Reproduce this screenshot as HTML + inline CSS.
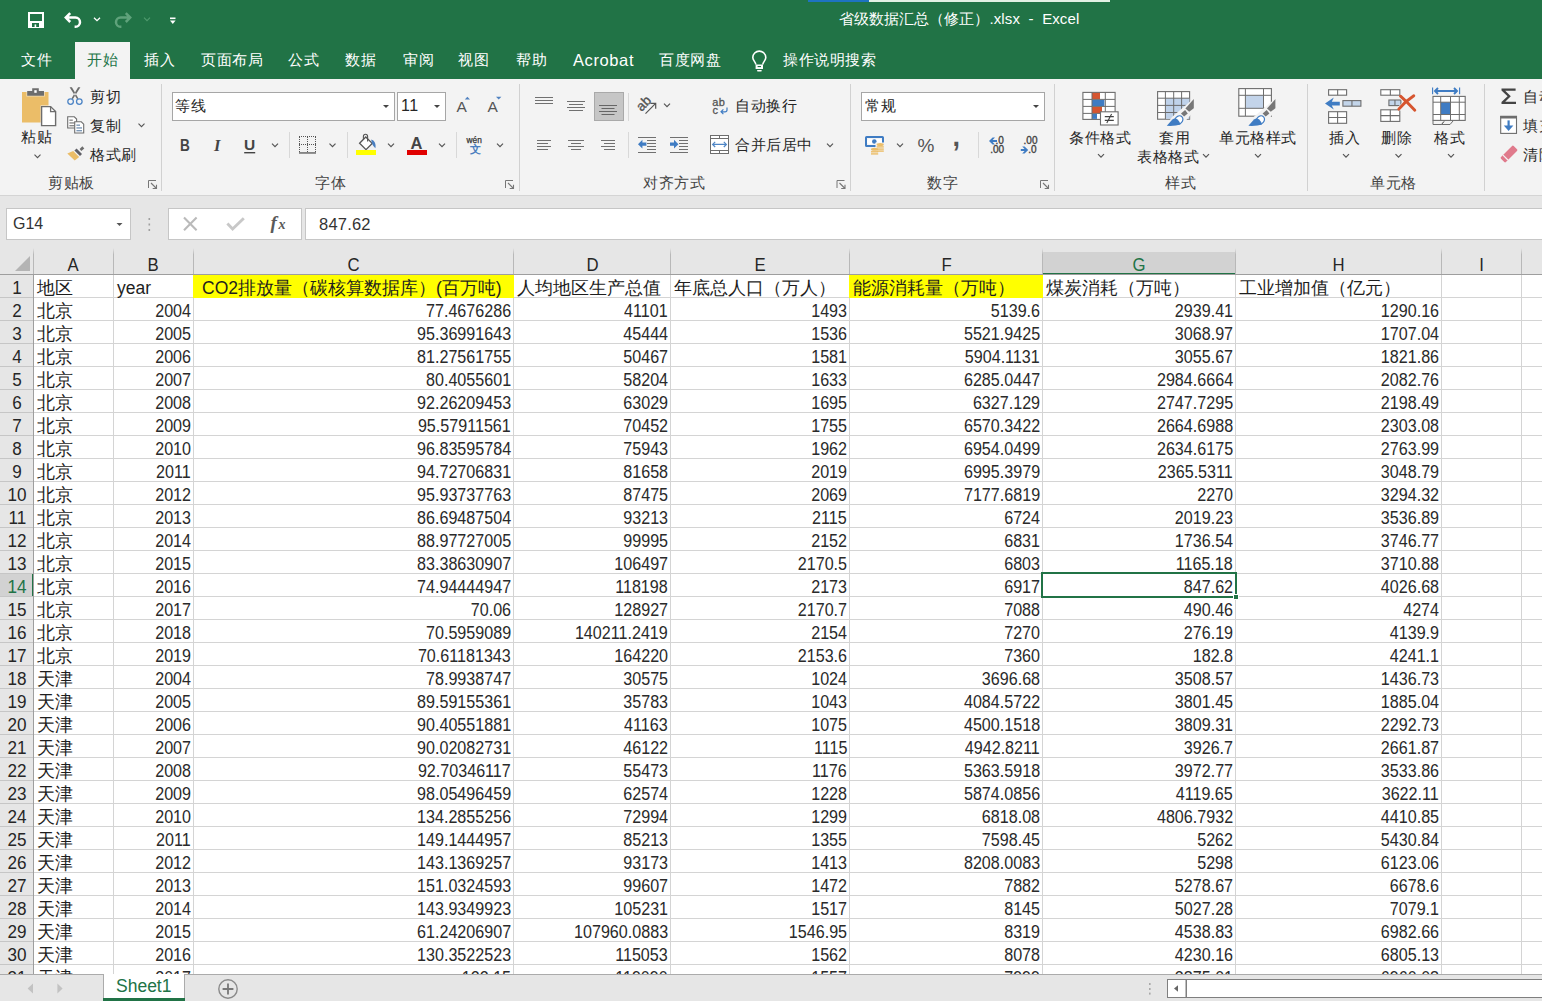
<!DOCTYPE html><html><head><meta charset="utf-8"><style>
body{margin:0;width:1542px;height:1001px;overflow:hidden;position:relative;background:#e6e6e6;font-family:"Liberation Sans",sans-serif;color:#262626}
.abs,.grid>*,.top>*,.bot>*{position:absolute}
.top{position:absolute;left:0;top:0;width:1542px;height:252px;background:#e6e6e6}
.titlebar{left:0;top:0;width:1542px;height:79px;background:#217346}
.prog{left:808px;top:0;width:302px;height:2px;background:#e2f1e4}
.prog i{position:absolute;left:0;top:0;width:61px;height:2px;background:#1e73c1}
.ttl{left:838.5px;top:8.5px;letter-spacing:0.1px;font-size:15px;color:#fff;white-space:pre;line-height:20px;font-weight:500}
.tab{top:49.5px;font-size:15px;color:#fff;line-height:20px;white-space:nowrap;font-weight:500;letter-spacing:0.6px}
.acttab{left:75px;top:42px;width:55px;height:37px;background:#f3f3f3}
.ribbon{left:0;top:79px;width:1542px;height:116px;background:#f3f3f3}
.rline{left:0;top:195px;width:1542px;height:1px;background:#d4d4d4}
.lbl{font-size:15px;line-height:20px;white-space:nowrap;color:#262626;font-weight:500;letter-spacing:0.6px}
.glbl{font-size:15px;line-height:20px;white-space:nowrap;color:#444;font-weight:500;letter-spacing:0.6px}
.gsep{top:84px;width:1px;height:107px;background:#d1d1d1}
.ssep{width:1px;background:#d9d9d9}
.combo{background:#fff;border:1px solid #a6a6a6;box-sizing:border-box}
.box{background:#fff;border:1px solid #c6c6c6;box-sizing:border-box}
.grid{position:absolute;left:0;top:0;width:1542px;height:974px;overflow:hidden}
.colhdr{left:0;top:248px;width:1542px;height:26px;background:#e6e6e6}
.rowhdr{left:0;top:275px;width:33px;height:700px;background:#e6e6e6}
.cells{left:34px;top:275px;width:1508px;height:700px;background:#fff}
.sel-colhdr{left:1042px;top:252px;width:194px;height:21px;background:#d2d2d2}
.sel-colhdr2{left:1042px;top:273px;width:194px;height:2px;background:#217346}
.sel-rowhdr{left:0;top:573px;width:32px;height:24px;background:#d2d2d2}
.sel-rowhdr2{left:32px;top:573px;width:2px;height:24px;background:#217346}
.selall{left:15px;top:256px}
.cl{top:254px;height:22px;text-align:center;font-size:18px;line-height:22px;color:#262626}
.cl span{display:inline-block;transform:scaleX(0.93)}
.cl.sel{color:#217346}
.hdiv{top:248px;width:1px;height:26px;background:linear-gradient(#e6e6e6,#b8b8b8 25%,#b8b8b8)}
.hbot{left:0;top:274px;width:1542px;height:1px;background:#9e9e9e}
.gh{left:34px;width:1508px;height:1px;background:#d4d4d4}
.rhh{left:0;width:33px;height:1px;background:#c6c6c6}
.gv{top:275px;width:1px;height:700px;background:#d4d4d4}
.rvline{left:33px;top:275px;width:1px;height:700px;background:#9e9e9e}
.yel{top:275px;height:23px;background:#ffff00}
.rn{left:0;width:33px;height:22px;text-align:center;font-size:18px;line-height:22px;color:#262626;margin-top:2px}
.rn span{display:inline-block;transform:scaleX(0.95);margin-left:1px}
.rn.sel{color:#217346}
.ct{height:22px;line-height:22px;font-size:17.5px;white-space:nowrap;color:#1e1e1e;margin-top:2px;font-weight:350}
.ct.r{text-align:right}
.n{display:inline-block;font-size:18px;transform:scaleX(0.895);transform-origin:100% 50%;color:#2a2a2a}
.selbox{left:1041px;top:572px;width:196px;height:26px;box-sizing:border-box;border:2px solid #217346}
.handle{left:1233px;top:594px;width:6px;height:6px;background:#217346;border:1px solid #fff;box-sizing:border-box}
.bot{position:absolute;left:0;top:974px;width:1542px;height:27px;background:#e6e6e6}
.bline{left:0;top:0;width:1542px;height:1px;background:#ababab}

</style></head><body>
<div class="top"><div class="titlebar"></div><div class="prog"><i></i></div><div class="ttl">省级数据汇总（修正）.xlsx  -  Excel</div><div class="acttab"></div><div class="tab" style="left:21px">文件</div><div class="tab" style="left:87px;color:#217346">开始</div><div class="tab" style="left:144px">插入</div><div class="tab" style="left:201px">页面布局</div><div class="tab" style="left:288px">公式</div><div class="tab" style="left:345px">数据</div><div class="tab" style="left:403px">审阅</div><div class="tab" style="left:458px">视图</div><div class="tab" style="left:516px">帮助</div><div class="tab" style="left:573px"><span style="font-size:16.5px;letter-spacing:0.6px">Acrobat</span></div><div class="tab" style="left:659px">百度网盘</div><div class="tab" style="left:783px">操作说明搜索</div><div class="ribbon"></div><div class="rline"></div><div class="gsep" style="left:161px"></div><div class="gsep" style="left:519px"></div><div class="gsep" style="left:850px"></div><div class="gsep" style="left:1054px"></div><div class="gsep" style="left:1307px"></div><div class="gsep" style="left:1484px"></div><div class="lbl" style="left:21px;top:127px">粘贴</div><div class="lbl" style="left:90px;top:87px">剪切</div><div class="lbl" style="left:90px;top:116px">复制</div><div class="lbl" style="left:90px;top:145px">格式刷</div><div class="glbl" style="left:48px;top:173px">剪贴板</div><div class="glbl" style="left:315px;top:173px">字体</div><div class="glbl" style="left:643px;top:173px">对齐方式</div><div class="glbl" style="left:927px;top:173px">数字</div><div class="glbl" style="left:1165px;top:173px">样式</div><div class="glbl" style="left:1370px;top:173px">单元格</div><div class="lbl" style="left:735px;top:96px">自动换行</div><div class="lbl" style="left:735px;top:135px">合并后居中</div><div class="lbl" style="left:1069px;top:128px">条件格式</div><div class="lbl" style="left:1159px;top:128px">套用</div><div class="lbl" style="left:1137px;top:147px">表格格式</div><div class="lbl" style="left:1219px;top:128px">单元格样式</div><div class="lbl" style="left:1329px;top:128px">插入</div><div class="lbl" style="left:1381px;top:128px">删除</div><div class="lbl" style="left:1434px;top:128px">格式</div><div class="lbl" style="left:1523px;top:87px">自动求和</div><div class="lbl" style="left:1523px;top:116px">填充</div><div class="lbl" style="left:1523px;top:145px">清除</div><div class="combo" style="left:172px;top:92px;width:223px;height:29px"></div><div class="lbl" style="left:175px;top:96px">等线</div><div class="combo" style="left:397px;top:92px;width:49px;height:29px"></div><div class="lbl" style="left:401px;top:96px;font-size:16px">11</div><div class="combo" style="left:861px;top:92px;width:184px;height:29px"></div><div class="lbl" style="left:865px;top:96px">常规</div><div class="box" style="left:6px;top:208px;width:125px;height:32px"></div><div class="lbl" style="left:13px;top:214px;font-size:16px;letter-spacing:0;color:#333">G14</div><div class="box" style="left:168px;top:208px;width:134px;height:32px"></div><div class="box" style="left:305px;top:208px;width:1240px;height:32px"></div><div class="lbl" style="left:319px;top:213.5px;font-size:16.5px;letter-spacing:0.2px;color:#333">847.62</div><svg class="abs" style="left:0;top:0" width="1542" height="252" viewBox="0 0 1542 252"><rect x="29" y="13" width="14" height="14" fill="none" stroke="#fff" stroke-width="2"/><rect x="29" y="21" width="14" height="6" fill="#fff"/><rect x="32" y="23" width="7" height="4" fill="#217346"/><rect x="34.6" y="24.4" width="1.6" height="2.6" fill="#fff"/><path d="M70.2 13.2 L65.8 17.6 L70.2 22 M66.4 17.6 H75.4 A4.6 4.6 0 0 1 75.4 26.8 H74.6" fill="none" stroke="#fff" stroke-width="2.5"/><path d="M94 17.7 L97 20.7 L100 17.7" fill="none" stroke="#fff" stroke-width="1.3"/><path d="M125.8 13.2 L130.2 17.6 L125.8 22 M129.6 17.6 H120.6 A4.6 4.6 0 0 0 120.6 26.8 H121.4" fill="none" stroke="#5fa27b" stroke-width="2.5"/><path d="M144 17.7 L147 20.7 L150 17.7" fill="none" stroke="#4f9a6e" stroke-width="1.1"/><rect x="170" y="17.5" width="5.5" height="1.6" fill="#fff"/><path d="M170 20.4 H175.6 L172.8 24 Z" fill="#fff"/><path d="M755.8 64.5 C755.8 62 752.8 60.6 752.8 57.6 A6.5 6.5 0 1 1 765.8 57.6 C765.8 60.6 762.8 62 762.8 64.5" fill="none" stroke="#fff" stroke-width="1.6"/><rect x="755.6" y="64.5" width="7.4" height="4.5" fill="#fff"/><rect x="757.6" y="66" width="3.4" height="1.1" fill="#217346"/><rect x="757" y="70" width="4.8" height="1.6" rx="0.8" fill="#fff"/><rect x="22" y="92" width="26.5" height="30.5" fill="#ebbd68"/><path d="M26.4 90.4 H31.6 V87.5 H39.4 V90.4 H44.8 V96.5 H26.4 Z" fill="#f3f3f3" opacity="0.6"/><path d="M27.2 91 H32.2 V88.2 H38.8 V91 H44 V95.8 H27.2 Z" fill="#6d6d6d"/><rect x="34.3" y="90.2" width="2.4" height="2.6" fill="#fff"/><path d="M40.6 105.6 H51 L56.6 111.2 V126.6 H40.6 Z" fill="#f3f3f3"/><path d="M41.6 106.6 H50.6 L55.6 111.6 V125.6 H41.6 Z" fill="#fff" stroke="#6d6d6d" stroke-width="1.4"/><path d="M50.6 106.6 V111.6 H55.6" fill="none" stroke="#6d6d6d" stroke-width="1.3"/><path d="M34.5 154.7 L37.5 157.7 L40.5 154.7" fill="none" stroke="#555" stroke-width="1.1"/><path d="M69.6 87.2 L71.9 87.2 L78.5 98.4 L77.2 99.3 Z M80.4 87.2 L78.1 87.2 L71.5 98.4 L72.8 99.3 Z" fill="#6d6d6d"/><circle cx="70.6" cy="101.6" r="2.8" fill="none" stroke="#4f86c6" stroke-width="1.3"/><circle cx="79.3" cy="101.6" r="2.8" fill="none" stroke="#4f86c6" stroke-width="1.3"/><path d="M67.7 116.8 H74.3 L76.6 119.1 V128 H67.7 Z" fill="#fff" stroke="#6d6d6d" stroke-width="1.1"/><rect x="69.4" y="119.6" width="3.3999999999999915" height="1.1" fill="#6d6d6d"/><rect x="69.4" y="122.4" width="5.199999999999989" height="1.1" fill="#6d6d6d"/><rect x="69.4" y="125.2" width="5.199999999999989" height="1.1" fill="#6d6d6d"/><path d="M74.7 121.8 H81.3 L83.7 124.2 V133 H74.7 Z" fill="#fff" stroke="#6d6d6d" stroke-width="1.1"/><rect x="76.4" y="124.6" width="3.5999999999999943" height="1.1" fill="#5d7fa5"/><rect x="76.4" y="127.4" width="5.599999999999994" height="1.1" fill="#5d7fa5"/><rect x="76.4" y="130.2" width="5.599999999999994" height="1.1" fill="#5d7fa5"/><path d="M138.5 123.7 L141.5 126.7 L144.5 123.7" fill="none" stroke="#555" stroke-width="1.1"/><path d="M82.4 146.3 L84.3 148.4 L81.3 151 L79.6 149 Z" fill="#6d6d6d"/><path d="M74.4 150.4 L76.6 148.6 L82 154 L80 155.9 Z" fill="#5f5f66"/><path d="M67.3 153.5 L73.2 151 L79.2 157 L74.7 160.4 Z" fill="#ebbd68"/><path d="M148.5 188.0 V180.5 H156.0" fill="none" stroke="#777" stroke-width="1"/><path d="M151.0 183.0 L156.5 188.5 M156.5 184.7 V188.5 H152.7" fill="none" stroke="#777" stroke-width="1.1"/><path d="M505.5 188.0 V180.5 H513.0" fill="none" stroke="#777" stroke-width="1"/><path d="M508.0 183.0 L513.5 188.5 M513.5 184.7 V188.5 H509.7" fill="none" stroke="#777" stroke-width="1.1"/><path d="M837 188.0 V180.5 H844.5" fill="none" stroke="#777" stroke-width="1"/><path d="M839.5 183.0 L845 188.5 M845 184.7 V188.5 H841.2" fill="none" stroke="#777" stroke-width="1.1"/><path d="M1040.5 188.0 V180.5 H1048.0" fill="none" stroke="#777" stroke-width="1"/><path d="M1043.0 183.0 L1048.5 188.5 M1048.5 184.7 V188.5 H1044.7" fill="none" stroke="#777" stroke-width="1.1"/><path d="M383 105.0 H389 L386 108.0 Z" fill="#444"/><path d="M434 105.0 H440 L437 108.0 Z" fill="#444"/><text x="456.5" y="112" font-family="Liberation Sans" font-size="15.5" fill="#555">A</text><path d="M464.8 99.4 L467.4 96.8 L470 99.4 Z" fill="#5182c0"/><text x="487.5" y="112" font-family="Liberation Sans" font-size="15.5" fill="#555">A</text><path d="M496 96.8 H501.4 L498.7 99.4 Z" fill="#5182c0"/><text x="180" y="151" font-family="Liberation Sans" font-weight="bold" font-size="16" transform="translate(180 0) scale(0.85 1) translate(-180 0)" fill="#444">B</text><text x="214" y="151" font-family="Liberation Serif" font-style="italic" font-weight="bold" font-size="16.5" fill="#444">I</text><text x="244" y="150" font-family="Liberation Sans" font-weight="bold" font-size="15.5" fill="#444">U</text><rect x="244.2" y="152" width="11" height="1.4" fill="#444"/><path d="M272 143.7 L275 146.7 L278 143.7" fill="none" stroke="#555" stroke-width="1.2"/><path d="M299 136.5 H316 M299 144.5 H316 M299.5 137 V153 M307.5 137 V153 M315.5 137 V153" fill="none" stroke="#555" stroke-width="1" stroke-dasharray="1 1"/><rect x="299" y="152.3" width="17" height="1.3" fill="#555"/><path d="M329.5 143.7 L332.5 146.7 L335.5 143.7" fill="none" stroke="#555" stroke-width="1.2"/><path d="M359.6 143.2 L365.8 137 L372.2 143.4 L366 149.6 Z" fill="#fff" stroke="#555" stroke-width="1.3"/><path d="M363.4 139.4 V136.4 A2.1 2.1 0 0 1 367.6 136.4 V141.4" fill="none" stroke="#555" stroke-width="1.1"/><path d="M371.2 139.6 C374.4 140.4 376.2 144 375.4 148.2 C373.6 147 371.4 144 371.2 139.6 Z" fill="#4a7ebf"/><rect x="356" y="150" width="20" height="5" fill="#ffff00"/><path d="M388 143.7 L391 146.7 L394 143.7" fill="none" stroke="#555" stroke-width="1.2"/><text x="410.5" y="148.8" font-family="Liberation Sans" font-weight="bold" font-size="16.5" fill="#444">A</text><rect x="407" y="150" width="20" height="5" fill="#e00000"/><path d="M439 143.7 L442 146.7 L445 143.7" fill="none" stroke="#555" stroke-width="1.2"/><text x="466.6" y="143.4" font-family="Liberation Sans" font-size="8.3" fill="#333" stroke="#333" stroke-width="0.25">wén</text><path d="M497 143.7 L500 146.7 L503 143.7" fill="none" stroke="#555" stroke-width="1.2"/><rect x="289.0" y="132" width="1" height="26" fill="#d8d8d8"/><rect x="347.0" y="132" width="1" height="26" fill="#d8d8d8"/><rect x="456.0" y="132" width="1" height="26" fill="#d8d8d8"/><rect x="628.0" y="93" width="1" height="28" fill="#d8d8d8"/><rect x="628.0" y="132" width="1" height="26" fill="#d8d8d8"/><rect x="978.0" y="132" width="1" height="26" fill="#d8d8d8"/><rect x="535" y="97" width="18" height="1" fill="#707070"/><rect x="535" y="100" width="18" height="1" fill="#707070"/><rect x="535" y="103" width="18" height="1" fill="#707070"/><rect x="567" y="101" width="18" height="1" fill="#707070"/><rect x="569" y="104" width="14" height="1" fill="#707070"/><rect x="567" y="107" width="18" height="1" fill="#707070"/><rect x="569" y="110" width="14" height="1" fill="#707070"/><rect x="594.5" y="92.5" width="29" height="28" fill="#c6c6c6" stroke="#a9a9a9" stroke-width="1"/><rect x="599" y="105" width="18" height="1" fill="#666"/><rect x="601.5" y="108" width="13.0" height="1" fill="#666"/><rect x="599" y="111" width="18" height="1" fill="#666"/><rect x="601.5" y="114" width="13.0" height="1" fill="#666"/><rect x="537" y="140" width="14" height="1" fill="#707070"/><rect x="537" y="143" width="11" height="1" fill="#707070"/><rect x="537" y="146" width="14" height="1" fill="#707070"/><rect x="537" y="149" width="11" height="1" fill="#707070"/><rect x="568" y="140" width="16" height="1" fill="#707070"/><rect x="571" y="143" width="10" height="1" fill="#707070"/><rect x="568" y="146" width="16" height="1" fill="#707070"/><rect x="571" y="149" width="10" height="1" fill="#707070"/><rect x="601" y="140" width="14" height="1" fill="#707070"/><rect x="604" y="143" width="11" height="1" fill="#707070"/><rect x="601" y="146" width="14" height="1" fill="#707070"/><rect x="604" y="149" width="11" height="1" fill="#707070"/><text transform="translate(641.4 111.9) rotate(-45)" font-family="Liberation Sans" font-size="13.5" fill="#555" stroke="#555" stroke-width="0.35">ab</text><path d="M645.5 113.6 L655.4 103.7 M650.4 103.4 H655.7 V108.7" fill="none" stroke="#555" stroke-width="1.2"/><path d="M664 103.7 L667 106.7 L670 103.7" fill="none" stroke="#555" stroke-width="1.2"/><rect x="638" y="137" width="18" height="1" fill="#707070"/><rect x="638" y="152" width="18" height="1" fill="#707070"/><rect x="647" y="140" width="9" height="1" fill="#707070"/><rect x="647" y="143" width="9" height="1" fill="#707070"/><rect x="647" y="146" width="9" height="1" fill="#707070"/><rect x="647" y="149" width="9" height="1" fill="#707070"/><path d="M638 144.2 L642.4 139.8 L642.4 142.6 L646.4 142.6 L646.4 145.8 L642.4 145.8 L642.4 148.6 Z" fill="#3f7cc3"/><rect x="670" y="137" width="18" height="1" fill="#707070"/><rect x="670" y="152" width="18" height="1" fill="#707070"/><rect x="679" y="140" width="9" height="1" fill="#707070"/><rect x="679" y="143" width="9" height="1" fill="#707070"/><rect x="679" y="146" width="9" height="1" fill="#707070"/><rect x="679" y="149" width="9" height="1" fill="#707070"/><path d="M678.4 144.2 L674 139.8 L674 142.6 L670 142.6 L670 145.8 L674 145.8 L674 148.6 Z" fill="#3f7cc3"/><text x="712.3" y="105.6" font-family="Liberation Sans" font-size="11" fill="#555" stroke="#555" stroke-width="0.3" letter-spacing="0.3">ab</text><text x="712.6" y="113.6" font-family="Liberation Sans" font-size="11" fill="#555" stroke="#555" stroke-width="0.3">c</text><path d="M727 107.5 V110 Q727 111.8 725 111.8 H721.2 M723.4 109.4 L721 111.8 L723.4 114.2" fill="none" stroke="#3f7cc3" stroke-width="1.2"/><rect x="710.5" y="135.5" width="18" height="18" fill="#fff" stroke="#6d6d6d" stroke-width="1"/><rect x="711" y="138" width="17" height="1" fill="#6d6d6d"/><rect x="711" y="150" width="17" height="1" fill="#6d6d6d"/><rect x="719" y="136" width="1" height="2" fill="#6d6d6d"/><rect x="719" y="151" width="1" height="2" fill="#6d6d6d"/><path d="M712.6 144.4 H726.4 M715.2 141.8 L712.6 144.4 L715.2 147 M723.8 141.8 L726.4 144.4 L723.8 147" fill="none" stroke="#4f86c6" stroke-width="1.2"/><path d="M827 143.7 L830 146.7 L833 143.7" fill="none" stroke="#555" stroke-width="1.2"/><path d="M1033 105.0 H1039 L1036 108.0 Z" fill="#444"/><rect x="866" y="137" width="17" height="9" rx="0.6" fill="none" stroke="#3f7cc3" stroke-width="2"/><path d="M868.6 139 H880.4 L882 140.6 V142.6 L880.4 144.2 H868.6 L867 142.6 V140.6 Z" fill="#fff"/><circle cx="874.3" cy="141.5" r="2.3" fill="#3f7cc3"/><path d="M875.5 142.4 H885 V152.6 H875.5 Z M870.5 147.4 H879 V156 H870.5 Z" fill="#f3f3f3"/><g fill="#ebbd68"><ellipse cx="880.2" cy="144.4" rx="3.6" ry="1.5"/><rect x="876.6" y="146.2" width="7.2" height="1.4"/><rect x="877.2" y="148.4" width="6.6" height="1.4"/><rect x="877.2" y="150.4" width="6.6" height="1.4"/><ellipse cx="874.6" cy="149.3" rx="3.6" ry="1.5"/><rect x="871" y="151.1" width="7.2" height="1.4"/><rect x="871" y="153.2" width="7.2" height="1.4"/></g><path d="M897 143.7 L900 146.7 L903 143.7" fill="none" stroke="#555" stroke-width="1.2"/><text x="917.5" y="152.3" font-family="Liberation Sans" font-size="19" fill="#555">%</text><text x="952.6" y="145.6" font-family="Liberation Sans" font-weight="bold" font-size="27" fill="#555">,</text><g font-family="Liberation Sans" font-size="10" fill="#444" stroke="#444" stroke-width="0.35"><text x="995.6" y="144">.0</text><text x="990.2" y="153">.00</text><text x="1023.6" y="144">.00</text><text x="1028.2" y="153">.0</text></g><path d="M989 141 L992.6 137.6 H995 L992.6 140 H997 V142 H992.6 L995 144.4 H992.6 Z" fill="#3f7cc3"/><path d="M1028.2 150 L1024.6 146.6 H1022.2 L1024.6 149 H1020.8 V151 H1024.6 L1022.2 153.4 H1024.6 Z" fill="#3f7cc3"/><rect x="1082.9" y="92.4" width="32.2" height="27" fill="#fff" stroke="#6d6d6d" stroke-width="1.1"/><rect x="1092" y="92.9" width="8" height="6.4" fill="#d6552f"/><rect x="1092" y="99.9" width="12.4" height="6.4" fill="#3f7cc3"/><rect x="1092" y="106.9" width="10" height="6.4" fill="#d6552f"/><rect x="1092" y="113.9" width="5" height="5" fill="#3f7cc3"/><path d="M1083 99.4 H1115 M1083 106.4 H1115 M1083 113.4 H1115 M1092 92.5 V119.5 M1105.3 92.5 V119.5" fill="none" stroke="#6d6d6d" stroke-width="1"/><rect x="1100.5" y="111.8" width="17.6" height="13.2" fill="#fff" stroke="#6d6d6d" stroke-width="1.1"/><path d="M1104.8 116.6 H1113.8 M1104.8 120.4 H1113.8 M1111.6 114 L1106.8 123" fill="none" stroke="#444" stroke-width="1.1"/><path d="M1098 154.2 L1101 157.2 L1104 154.2" fill="none" stroke="#555" stroke-width="1.2"/><rect x="1157.6" y="91.6" width="32" height="27.6" fill="#fff" stroke="#6d6d6d" stroke-width="1.1"/><rect x="1165.4" y="98.2" width="24" height="20.6" fill="#bfd2ea"/><path d="M1157.6 98.2 H1189.6 M1157.6 105.4 H1189.6 M1157.6 112.5 H1189.6 M1165.4 91.6 V119 M1173.7 91.6 V119 M1181.6 91.6 V119" fill="none" stroke="#6d6d6d" stroke-width="1"/><g transform="translate(0 0)"><path d="M1164.5 127.5 L1172 117 L1195.4 97 V109.2 L1183 124 Z" fill="#f3f3f3"/><path d="M1193.8 99.1 V108.3 L1189.2 111.7 L1185.4 108.6 Z" fill="#777"/><path d="M1181 113.4 L1185.1 110 L1187.8 113.4 L1184.1 116.6 Z" fill="#777"/><ellipse cx="0" cy="0" rx="4.5" ry="3.7" transform="translate(1178.8 120) rotate(-45)" fill="#fff" stroke="#3f7cc3" stroke-width="1.2"/><path d="M1166.8 125.8 L1172.4 119.6 Q1175 117.6 1177.6 119.4 Q1180 121.6 1180.4 124.6 Q1175.5 126.2 1166.8 125.8 Z" fill="#3f7cc3"/></g><path d="M1203 154.2 L1206 157.2 L1209 154.2" fill="none" stroke="#555" stroke-width="1.2"/><rect x="1238.8" y="88.6" width="32.6" height="27.6" fill="#fff" stroke="#6d6d6d" stroke-width="1.1"/><rect x="1245.4" y="95.3" width="18" height="13" fill="#c3d4ea"/><path d="M1238.8 95.3 H1271.4 M1238.8 108.3 H1271.4 M1245.4 88.6 V116 M1263.5 88.6 V116" fill="none" stroke="#6d6d6d" stroke-width="1"/><g transform="translate(81.6 0)"><path d="M1164.5 127.5 L1172 117 L1195.4 97 V109.2 L1183 124 Z" fill="#f3f3f3"/><path d="M1193.8 99.1 V108.3 L1189.2 111.7 L1185.4 108.6 Z" fill="#777"/><path d="M1181 113.4 L1185.1 110 L1187.8 113.4 L1184.1 116.6 Z" fill="#777"/><ellipse cx="0" cy="0" rx="4.5" ry="3.7" transform="translate(1178.8 120) rotate(-45)" fill="#fff" stroke="#3f7cc3" stroke-width="1.2"/><path d="M1166.8 125.8 L1172.4 119.6 Q1175 117.6 1177.6 119.4 Q1180 121.6 1180.4 124.6 Q1175.5 126.2 1166.8 125.8 Z" fill="#3f7cc3"/></g><path d="M1255 154.2 L1258 157.2 L1261 154.2" fill="none" stroke="#555" stroke-width="1.2"/><rect x="1328.6" y="89.7" width="18" height="5.5" fill="#fff" stroke="#6d6d6d" stroke-width="1.1"/><rect x="1337.1" y="89.7" width="1.1" height="5.5" fill="#6d6d6d"/><rect x="1342.9" y="100.6" width="18" height="5.6" fill="#c3d5ea" stroke="#6d6d6d" stroke-width="1.1"/><rect x="1351.4" y="100.6" width="1.1" height="5.6" fill="#6d6d6d"/><path d="M1325 103.6 L1333.8 97.6 L1331.8 101.8 H1339.8 V105.4 H1331.8 L1333.8 109.6 Z" fill="#3f7cc3"/><rect x="1328.6" y="111.7" width="18" height="11.6" fill="#fff" stroke="#6d6d6d" stroke-width="1.1"/><path d="M1337.6 111.7 V123.3 M1328.6 117.5 H1346.6" stroke="#6d6d6d" stroke-width="1.1"/><path d="M1343 154.2 L1346 157.2 L1349 154.2" fill="none" stroke="#555" stroke-width="1.2"/><rect x="1380.8" y="89.7" width="19" height="5.5" fill="#fff" stroke="#6d6d6d" stroke-width="1.1"/><rect x="1389.8" y="89.7" width="1.1" height="5.5" fill="#6d6d6d"/><rect x="1388.9" y="100" width="12" height="5.6" fill="#c3d5ea" stroke="#6d6d6d" stroke-width="1.1"/><rect x="1394.4" y="100" width="1.1" height="5.6" fill="#6d6d6d"/><rect x="1380.8" y="109.8" width="19" height="11.6" fill="#fff" stroke="#6d6d6d" stroke-width="1.1"/><path d="M1390.3 109.8 V121.4 M1380.8 115.6 H1399.8" stroke="#6d6d6d" stroke-width="1.1"/><path d="M1398.5 109.3 L1413.5 95.6 M1400.5 96.2 L1414.8 110.2" fill="none" stroke="#f3f3f3" stroke-width="4.5"/><path d="M1398.8 109.2 Q1405 101.5 1413.8 95.8 M1400.5 96.2 Q1407 102 1414.8 110.2" fill="none" stroke="#d6552f" stroke-width="2.9" stroke-linecap="round"/><path d="M1395.5 154.2 L1398.5 157.2 L1401.5 154.2" fill="none" stroke="#555" stroke-width="1.2"/><path d="M1432.6 87.6 V94.2 M1459.6 87.6 V94.2" fill="none" stroke="#3f7cc3" stroke-width="1.1"/><path d="M1435 91 H1457 M1438 88 L1435 91 L1438 94 M1454 88 L1457 91 L1454 94" fill="none" stroke="#3f7cc3" stroke-width="1.9"/><rect x="1433" y="96.4" width="32.2" height="24" fill="#fff" stroke="#6d6d6d" stroke-width="1.1"/><rect x="1441" y="102.2" width="9.4" height="12.2" fill="#3f7cc3"/><path d="M1433 102.2 H1465.2 M1433 114.5 H1465.2 M1440.7 96.4 V120.4 M1450.5 96.4 V120.4 M1459.3 96.4 V120.4" fill="none" stroke="#6d6d6d" stroke-width="1"/><path d="M1433 120.4 V124.5 H1441.5 L1444 121.5 L1441.6 124.5 H1450 L1453 121" fill="none" stroke="#6d6d6d" stroke-width="1"/><path d="M1448 154.2 L1451 157.2 L1454 154.2" fill="none" stroke="#555" stroke-width="1.2"/><path d="M1501.5 88.4 H1515.6 V90.8 H1505.2 L1510.8 96.3 L1505.2 101.7 H1516 V104.1 H1501.5 V102 L1507.6 96.3 L1501.5 90.6 Z" fill="#444"/><rect x="1500.7" y="116.4" width="15.8" height="17" fill="#fff" stroke="#6d6d6d" stroke-width="1.1"/><rect x="1500.2" y="115.9" width="16.8" height="2.6" fill="#6d6d6d"/><path d="M1508.6 120.4 V128" fill="none" stroke="#3f7cc3" stroke-width="2.2"/><path d="M1503.8 125.4 H1513.4 L1508.6 131 Z" fill="#3f7cc3"/><g transform="rotate(-45 1509 154)"><rect x="1500" y="150.5" width="18" height="7" rx="1.2" fill="#e07a8c"/><rect x="1503.4" y="150.5" width="1.2" height="7" fill="#f3f3f3"/></g><path d="M116.5 223.0 H122.5 L119.5 226.0 Z" fill="#555"/><rect x="148.5" y="218" width="1.6" height="2" fill="#a0a0a0"/><rect x="148.5" y="223.5" width="1.6" height="2" fill="#a0a0a0"/><rect x="148.5" y="229" width="1.6" height="2" fill="#a0a0a0"/><path d="M184 217.6 L196.6 230.2 M196.6 217.6 L184 230.2" stroke="#bababa" stroke-width="2.1"/><path d="M227.4 223.6 L232.6 229 L243.8 218.2" fill="none" stroke="#c8c8c8" stroke-width="2.9"/><text x="270.4" y="228.8" font-family="Liberation Serif" font-style="italic" font-weight="bold" font-size="19" fill="#5a5a5a">f</text><text x="278.6" y="228.6" font-family="Liberation Serif" font-style="italic" font-weight="bold" font-size="14" fill="#5a5a5a">x</text></svg><div class="lbl" style="left:469.5px;top:142px;font-size:11px;line-height:14px;letter-spacing:0;font-weight:700;color:#4a7ebf">文</div></div>
<div class="grid"><div class="colhdr"></div><div class="cells"></div><div class="rowhdr"></div><div class="sel-colhdr"></div><div class="sel-rowhdr"></div><div class="sel-colhdr2"></div><div class="sel-rowhdr2"></div><div class="rvline"></div><svg class="selall" width="16" height="16" viewBox="0 0 16 16"><path d="M15 0 L15 15 L0 15 Z" fill="#b4b4b4"/></svg><div class="cl" style="left:34px;width:79px"><span>A</span></div><div class="cl" style="left:114px;width:79px"><span>B</span></div><div class="cl" style="left:194px;width:319px"><span>C</span></div><div class="cl" style="left:514px;width:156px"><span>D</span></div><div class="cl" style="left:671px;width:178px"><span>E</span></div><div class="cl" style="left:850px;width:192px"><span>F</span></div><div class="cl sel" style="left:1043px;width:192px"><span>G</span></div><div class="cl" style="left:1236px;width:205px"><span>H</span></div><div class="cl" style="left:1442px;width:79px"><span>I</span></div><div class="hdiv" style="left:33px"></div><div class="hdiv" style="left:113px"></div><div class="hdiv" style="left:193px"></div><div class="hdiv" style="left:513px"></div><div class="hdiv" style="left:670px"></div><div class="hdiv" style="left:849px"></div><div class="hdiv" style="left:1042px"></div><div class="hdiv" style="left:1235px"></div><div class="hdiv" style="left:1441px"></div><div class="hdiv" style="left:1521px"></div><div class="hbot"></div><div class="gh" style="top:297px"></div><div class="rhh" style="top:297px"></div><div class="gh" style="top:320px"></div><div class="rhh" style="top:320px"></div><div class="gh" style="top:343px"></div><div class="rhh" style="top:343px"></div><div class="gh" style="top:366px"></div><div class="rhh" style="top:366px"></div><div class="gh" style="top:389px"></div><div class="rhh" style="top:389px"></div><div class="gh" style="top:412px"></div><div class="rhh" style="top:412px"></div><div class="gh" style="top:435px"></div><div class="rhh" style="top:435px"></div><div class="gh" style="top:458px"></div><div class="rhh" style="top:458px"></div><div class="gh" style="top:481px"></div><div class="rhh" style="top:481px"></div><div class="gh" style="top:504px"></div><div class="rhh" style="top:504px"></div><div class="gh" style="top:527px"></div><div class="rhh" style="top:527px"></div><div class="gh" style="top:550px"></div><div class="rhh" style="top:550px"></div><div class="gh" style="top:573px"></div><div class="rhh" style="top:573px"></div><div class="gh" style="top:596px"></div><div class="rhh" style="top:596px"></div><div class="gh" style="top:619px"></div><div class="rhh" style="top:619px"></div><div class="gh" style="top:642px"></div><div class="rhh" style="top:642px"></div><div class="gh" style="top:665px"></div><div class="rhh" style="top:665px"></div><div class="gh" style="top:688px"></div><div class="rhh" style="top:688px"></div><div class="gh" style="top:711px"></div><div class="rhh" style="top:711px"></div><div class="gh" style="top:734px"></div><div class="rhh" style="top:734px"></div><div class="gh" style="top:757px"></div><div class="rhh" style="top:757px"></div><div class="gh" style="top:780px"></div><div class="rhh" style="top:780px"></div><div class="gh" style="top:803px"></div><div class="rhh" style="top:803px"></div><div class="gh" style="top:826px"></div><div class="rhh" style="top:826px"></div><div class="gh" style="top:849px"></div><div class="rhh" style="top:849px"></div><div class="gh" style="top:872px"></div><div class="rhh" style="top:872px"></div><div class="gh" style="top:895px"></div><div class="rhh" style="top:895px"></div><div class="gh" style="top:918px"></div><div class="rhh" style="top:918px"></div><div class="gh" style="top:941px"></div><div class="rhh" style="top:941px"></div><div class="gh" style="top:964px"></div><div class="rhh" style="top:964px"></div><div class="gv" style="left:113px"></div><div class="gv" style="left:193px"></div><div class="gv" style="left:513px"></div><div class="gv" style="left:670px"></div><div class="gv" style="left:849px"></div><div class="gv" style="left:1042px"></div><div class="gv" style="left:1235px"></div><div class="gv" style="left:1441px"></div><div class="gv" style="left:1521px"></div><div class="yel" style="left:193px;width:321px"></div><div class="yel" style="left:849px;width:194px"></div><div class="rn" style="top:275px"><span>1</span></div><div class="rn" style="top:298px"><span>2</span></div><div class="rn" style="top:321px"><span>3</span></div><div class="rn" style="top:344px"><span>4</span></div><div class="rn" style="top:367px"><span>5</span></div><div class="rn" style="top:390px"><span>6</span></div><div class="rn" style="top:413px"><span>7</span></div><div class="rn" style="top:436px"><span>8</span></div><div class="rn" style="top:459px"><span>9</span></div><div class="rn" style="top:482px"><span>10</span></div><div class="rn" style="top:505px"><span>11</span></div><div class="rn" style="top:528px"><span>12</span></div><div class="rn" style="top:551px"><span>13</span></div><div class="rn sel" style="top:574px"><span>14</span></div><div class="rn" style="top:597px"><span>15</span></div><div class="rn" style="top:620px"><span>16</span></div><div class="rn" style="top:643px"><span>17</span></div><div class="rn" style="top:666px"><span>18</span></div><div class="rn" style="top:689px"><span>19</span></div><div class="rn" style="top:712px"><span>20</span></div><div class="rn" style="top:735px"><span>21</span></div><div class="rn" style="top:758px"><span>22</span></div><div class="rn" style="top:781px"><span>23</span></div><div class="rn" style="top:804px"><span>24</span></div><div class="rn" style="top:827px"><span>25</span></div><div class="rn" style="top:850px"><span>26</span></div><div class="rn" style="top:873px"><span>27</span></div><div class="rn" style="top:896px"><span>28</span></div><div class="rn" style="top:919px"><span>29</span></div><div class="rn" style="top:942px"><span>30</span></div><div class="rn" style="top:965px"><span>31</span></div><div class="ct" style="top:275px;left:37px">地区</div><div class="ct" style="top:275px;left:117px">year</div><div class="ct" style="top:275px;left:202px">CO2排放量（碳核算数据库）(百万吨)</div><div class="ct" style="top:275px;left:517px">人均地区生产总值</div><div class="ct" style="top:275px;left:674px">年底总人口（万人）</div><div class="ct" style="top:275px;left:853px">能源消耗量（万吨）</div><div class="ct" style="top:275px;left:1046px">煤炭消耗（万吨）</div><div class="ct" style="top:275px;left:1239px">工业增加值（亿元）</div><div class="ct" style="top:298px;left:37px">北京</div><div class="ct r" style="top:298px;left:114px;width:77px"><span class="n">2004</span></div><div class="ct r" style="top:298px;left:194px;width:317px"><span class="n">77.4676286</span></div><div class="ct r" style="top:298px;left:514px;width:154px"><span class="n">41101</span></div><div class="ct r" style="top:298px;left:671px;width:176px"><span class="n">1493</span></div><div class="ct r" style="top:298px;left:850px;width:190px"><span class="n">5139.6</span></div><div class="ct r" style="top:298px;left:1043px;width:190px"><span class="n">2939.41</span></div><div class="ct r" style="top:298px;left:1236px;width:203px"><span class="n">1290.16</span></div><div class="ct" style="top:321px;left:37px">北京</div><div class="ct r" style="top:321px;left:114px;width:77px"><span class="n">2005</span></div><div class="ct r" style="top:321px;left:194px;width:317px"><span class="n">95.36991643</span></div><div class="ct r" style="top:321px;left:514px;width:154px"><span class="n">45444</span></div><div class="ct r" style="top:321px;left:671px;width:176px"><span class="n">1536</span></div><div class="ct r" style="top:321px;left:850px;width:190px"><span class="n">5521.9425</span></div><div class="ct r" style="top:321px;left:1043px;width:190px"><span class="n">3068.97</span></div><div class="ct r" style="top:321px;left:1236px;width:203px"><span class="n">1707.04</span></div><div class="ct" style="top:344px;left:37px">北京</div><div class="ct r" style="top:344px;left:114px;width:77px"><span class="n">2006</span></div><div class="ct r" style="top:344px;left:194px;width:317px"><span class="n">81.27561755</span></div><div class="ct r" style="top:344px;left:514px;width:154px"><span class="n">50467</span></div><div class="ct r" style="top:344px;left:671px;width:176px"><span class="n">1581</span></div><div class="ct r" style="top:344px;left:850px;width:190px"><span class="n">5904.1131</span></div><div class="ct r" style="top:344px;left:1043px;width:190px"><span class="n">3055.67</span></div><div class="ct r" style="top:344px;left:1236px;width:203px"><span class="n">1821.86</span></div><div class="ct" style="top:367px;left:37px">北京</div><div class="ct r" style="top:367px;left:114px;width:77px"><span class="n">2007</span></div><div class="ct r" style="top:367px;left:194px;width:317px"><span class="n">80.4055601</span></div><div class="ct r" style="top:367px;left:514px;width:154px"><span class="n">58204</span></div><div class="ct r" style="top:367px;left:671px;width:176px"><span class="n">1633</span></div><div class="ct r" style="top:367px;left:850px;width:190px"><span class="n">6285.0447</span></div><div class="ct r" style="top:367px;left:1043px;width:190px"><span class="n">2984.6664</span></div><div class="ct r" style="top:367px;left:1236px;width:203px"><span class="n">2082.76</span></div><div class="ct" style="top:390px;left:37px">北京</div><div class="ct r" style="top:390px;left:114px;width:77px"><span class="n">2008</span></div><div class="ct r" style="top:390px;left:194px;width:317px"><span class="n">92.26209453</span></div><div class="ct r" style="top:390px;left:514px;width:154px"><span class="n">63029</span></div><div class="ct r" style="top:390px;left:671px;width:176px"><span class="n">1695</span></div><div class="ct r" style="top:390px;left:850px;width:190px"><span class="n">6327.129</span></div><div class="ct r" style="top:390px;left:1043px;width:190px"><span class="n">2747.7295</span></div><div class="ct r" style="top:390px;left:1236px;width:203px"><span class="n">2198.49</span></div><div class="ct" style="top:413px;left:37px">北京</div><div class="ct r" style="top:413px;left:114px;width:77px"><span class="n">2009</span></div><div class="ct r" style="top:413px;left:194px;width:317px"><span class="n">95.57911561</span></div><div class="ct r" style="top:413px;left:514px;width:154px"><span class="n">70452</span></div><div class="ct r" style="top:413px;left:671px;width:176px"><span class="n">1755</span></div><div class="ct r" style="top:413px;left:850px;width:190px"><span class="n">6570.3422</span></div><div class="ct r" style="top:413px;left:1043px;width:190px"><span class="n">2664.6988</span></div><div class="ct r" style="top:413px;left:1236px;width:203px"><span class="n">2303.08</span></div><div class="ct" style="top:436px;left:37px">北京</div><div class="ct r" style="top:436px;left:114px;width:77px"><span class="n">2010</span></div><div class="ct r" style="top:436px;left:194px;width:317px"><span class="n">96.83595784</span></div><div class="ct r" style="top:436px;left:514px;width:154px"><span class="n">75943</span></div><div class="ct r" style="top:436px;left:671px;width:176px"><span class="n">1962</span></div><div class="ct r" style="top:436px;left:850px;width:190px"><span class="n">6954.0499</span></div><div class="ct r" style="top:436px;left:1043px;width:190px"><span class="n">2634.6175</span></div><div class="ct r" style="top:436px;left:1236px;width:203px"><span class="n">2763.99</span></div><div class="ct" style="top:459px;left:37px">北京</div><div class="ct r" style="top:459px;left:114px;width:77px"><span class="n">2011</span></div><div class="ct r" style="top:459px;left:194px;width:317px"><span class="n">94.72706831</span></div><div class="ct r" style="top:459px;left:514px;width:154px"><span class="n">81658</span></div><div class="ct r" style="top:459px;left:671px;width:176px"><span class="n">2019</span></div><div class="ct r" style="top:459px;left:850px;width:190px"><span class="n">6995.3979</span></div><div class="ct r" style="top:459px;left:1043px;width:190px"><span class="n">2365.5311</span></div><div class="ct r" style="top:459px;left:1236px;width:203px"><span class="n">3048.79</span></div><div class="ct" style="top:482px;left:37px">北京</div><div class="ct r" style="top:482px;left:114px;width:77px"><span class="n">2012</span></div><div class="ct r" style="top:482px;left:194px;width:317px"><span class="n">95.93737763</span></div><div class="ct r" style="top:482px;left:514px;width:154px"><span class="n">87475</span></div><div class="ct r" style="top:482px;left:671px;width:176px"><span class="n">2069</span></div><div class="ct r" style="top:482px;left:850px;width:190px"><span class="n">7177.6819</span></div><div class="ct r" style="top:482px;left:1043px;width:190px"><span class="n">2270</span></div><div class="ct r" style="top:482px;left:1236px;width:203px"><span class="n">3294.32</span></div><div class="ct" style="top:505px;left:37px">北京</div><div class="ct r" style="top:505px;left:114px;width:77px"><span class="n">2013</span></div><div class="ct r" style="top:505px;left:194px;width:317px"><span class="n">86.69487504</span></div><div class="ct r" style="top:505px;left:514px;width:154px"><span class="n">93213</span></div><div class="ct r" style="top:505px;left:671px;width:176px"><span class="n">2115</span></div><div class="ct r" style="top:505px;left:850px;width:190px"><span class="n">6724</span></div><div class="ct r" style="top:505px;left:1043px;width:190px"><span class="n">2019.23</span></div><div class="ct r" style="top:505px;left:1236px;width:203px"><span class="n">3536.89</span></div><div class="ct" style="top:528px;left:37px">北京</div><div class="ct r" style="top:528px;left:114px;width:77px"><span class="n">2014</span></div><div class="ct r" style="top:528px;left:194px;width:317px"><span class="n">88.97727005</span></div><div class="ct r" style="top:528px;left:514px;width:154px"><span class="n">99995</span></div><div class="ct r" style="top:528px;left:671px;width:176px"><span class="n">2152</span></div><div class="ct r" style="top:528px;left:850px;width:190px"><span class="n">6831</span></div><div class="ct r" style="top:528px;left:1043px;width:190px"><span class="n">1736.54</span></div><div class="ct r" style="top:528px;left:1236px;width:203px"><span class="n">3746.77</span></div><div class="ct" style="top:551px;left:37px">北京</div><div class="ct r" style="top:551px;left:114px;width:77px"><span class="n">2015</span></div><div class="ct r" style="top:551px;left:194px;width:317px"><span class="n">83.38630907</span></div><div class="ct r" style="top:551px;left:514px;width:154px"><span class="n">106497</span></div><div class="ct r" style="top:551px;left:671px;width:176px"><span class="n">2170.5</span></div><div class="ct r" style="top:551px;left:850px;width:190px"><span class="n">6803</span></div><div class="ct r" style="top:551px;left:1043px;width:190px"><span class="n">1165.18</span></div><div class="ct r" style="top:551px;left:1236px;width:203px"><span class="n">3710.88</span></div><div class="ct" style="top:574px;left:37px">北京</div><div class="ct r" style="top:574px;left:114px;width:77px"><span class="n">2016</span></div><div class="ct r" style="top:574px;left:194px;width:317px"><span class="n">74.94444947</span></div><div class="ct r" style="top:574px;left:514px;width:154px"><span class="n">118198</span></div><div class="ct r" style="top:574px;left:671px;width:176px"><span class="n">2173</span></div><div class="ct r" style="top:574px;left:850px;width:190px"><span class="n">6917</span></div><div class="ct r" style="top:574px;left:1043px;width:190px"><span class="n">847.62</span></div><div class="ct r" style="top:574px;left:1236px;width:203px"><span class="n">4026.68</span></div><div class="ct" style="top:597px;left:37px">北京</div><div class="ct r" style="top:597px;left:114px;width:77px"><span class="n">2017</span></div><div class="ct r" style="top:597px;left:194px;width:317px"><span class="n">70.06</span></div><div class="ct r" style="top:597px;left:514px;width:154px"><span class="n">128927</span></div><div class="ct r" style="top:597px;left:671px;width:176px"><span class="n">2170.7</span></div><div class="ct r" style="top:597px;left:850px;width:190px"><span class="n">7088</span></div><div class="ct r" style="top:597px;left:1043px;width:190px"><span class="n">490.46</span></div><div class="ct r" style="top:597px;left:1236px;width:203px"><span class="n">4274</span></div><div class="ct" style="top:620px;left:37px">北京</div><div class="ct r" style="top:620px;left:114px;width:77px"><span class="n">2018</span></div><div class="ct r" style="top:620px;left:194px;width:317px"><span class="n">70.5959089</span></div><div class="ct r" style="top:620px;left:514px;width:154px"><span class="n">140211.2419</span></div><div class="ct r" style="top:620px;left:671px;width:176px"><span class="n">2154</span></div><div class="ct r" style="top:620px;left:850px;width:190px"><span class="n">7270</span></div><div class="ct r" style="top:620px;left:1043px;width:190px"><span class="n">276.19</span></div><div class="ct r" style="top:620px;left:1236px;width:203px"><span class="n">4139.9</span></div><div class="ct" style="top:643px;left:37px">北京</div><div class="ct r" style="top:643px;left:114px;width:77px"><span class="n">2019</span></div><div class="ct r" style="top:643px;left:194px;width:317px"><span class="n">70.61181343</span></div><div class="ct r" style="top:643px;left:514px;width:154px"><span class="n">164220</span></div><div class="ct r" style="top:643px;left:671px;width:176px"><span class="n">2153.6</span></div><div class="ct r" style="top:643px;left:850px;width:190px"><span class="n">7360</span></div><div class="ct r" style="top:643px;left:1043px;width:190px"><span class="n">182.8</span></div><div class="ct r" style="top:643px;left:1236px;width:203px"><span class="n">4241.1</span></div><div class="ct" style="top:666px;left:37px">天津</div><div class="ct r" style="top:666px;left:114px;width:77px"><span class="n">2004</span></div><div class="ct r" style="top:666px;left:194px;width:317px"><span class="n">78.9938747</span></div><div class="ct r" style="top:666px;left:514px;width:154px"><span class="n">30575</span></div><div class="ct r" style="top:666px;left:671px;width:176px"><span class="n">1024</span></div><div class="ct r" style="top:666px;left:850px;width:190px"><span class="n">3696.68</span></div><div class="ct r" style="top:666px;left:1043px;width:190px"><span class="n">3508.57</span></div><div class="ct r" style="top:666px;left:1236px;width:203px"><span class="n">1436.73</span></div><div class="ct" style="top:689px;left:37px">天津</div><div class="ct r" style="top:689px;left:114px;width:77px"><span class="n">2005</span></div><div class="ct r" style="top:689px;left:194px;width:317px"><span class="n">89.59155361</span></div><div class="ct r" style="top:689px;left:514px;width:154px"><span class="n">35783</span></div><div class="ct r" style="top:689px;left:671px;width:176px"><span class="n">1043</span></div><div class="ct r" style="top:689px;left:850px;width:190px"><span class="n">4084.5722</span></div><div class="ct r" style="top:689px;left:1043px;width:190px"><span class="n">3801.45</span></div><div class="ct r" style="top:689px;left:1236px;width:203px"><span class="n">1885.04</span></div><div class="ct" style="top:712px;left:37px">天津</div><div class="ct r" style="top:712px;left:114px;width:77px"><span class="n">2006</span></div><div class="ct r" style="top:712px;left:194px;width:317px"><span class="n">90.40551881</span></div><div class="ct r" style="top:712px;left:514px;width:154px"><span class="n">41163</span></div><div class="ct r" style="top:712px;left:671px;width:176px"><span class="n">1075</span></div><div class="ct r" style="top:712px;left:850px;width:190px"><span class="n">4500.1518</span></div><div class="ct r" style="top:712px;left:1043px;width:190px"><span class="n">3809.31</span></div><div class="ct r" style="top:712px;left:1236px;width:203px"><span class="n">2292.73</span></div><div class="ct" style="top:735px;left:37px">天津</div><div class="ct r" style="top:735px;left:114px;width:77px"><span class="n">2007</span></div><div class="ct r" style="top:735px;left:194px;width:317px"><span class="n">90.02082731</span></div><div class="ct r" style="top:735px;left:514px;width:154px"><span class="n">46122</span></div><div class="ct r" style="top:735px;left:671px;width:176px"><span class="n">1115</span></div><div class="ct r" style="top:735px;left:850px;width:190px"><span class="n">4942.8211</span></div><div class="ct r" style="top:735px;left:1043px;width:190px"><span class="n">3926.7</span></div><div class="ct r" style="top:735px;left:1236px;width:203px"><span class="n">2661.87</span></div><div class="ct" style="top:758px;left:37px">天津</div><div class="ct r" style="top:758px;left:114px;width:77px"><span class="n">2008</span></div><div class="ct r" style="top:758px;left:194px;width:317px"><span class="n">92.70346117</span></div><div class="ct r" style="top:758px;left:514px;width:154px"><span class="n">55473</span></div><div class="ct r" style="top:758px;left:671px;width:176px"><span class="n">1176</span></div><div class="ct r" style="top:758px;left:850px;width:190px"><span class="n">5363.5918</span></div><div class="ct r" style="top:758px;left:1043px;width:190px"><span class="n">3972.77</span></div><div class="ct r" style="top:758px;left:1236px;width:203px"><span class="n">3533.86</span></div><div class="ct" style="top:781px;left:37px">天津</div><div class="ct r" style="top:781px;left:114px;width:77px"><span class="n">2009</span></div><div class="ct r" style="top:781px;left:194px;width:317px"><span class="n">98.05496459</span></div><div class="ct r" style="top:781px;left:514px;width:154px"><span class="n">62574</span></div><div class="ct r" style="top:781px;left:671px;width:176px"><span class="n">1228</span></div><div class="ct r" style="top:781px;left:850px;width:190px"><span class="n">5874.0856</span></div><div class="ct r" style="top:781px;left:1043px;width:190px"><span class="n">4119.65</span></div><div class="ct r" style="top:781px;left:1236px;width:203px"><span class="n">3622.11</span></div><div class="ct" style="top:804px;left:37px">天津</div><div class="ct r" style="top:804px;left:114px;width:77px"><span class="n">2010</span></div><div class="ct r" style="top:804px;left:194px;width:317px"><span class="n">134.2855256</span></div><div class="ct r" style="top:804px;left:514px;width:154px"><span class="n">72994</span></div><div class="ct r" style="top:804px;left:671px;width:176px"><span class="n">1299</span></div><div class="ct r" style="top:804px;left:850px;width:190px"><span class="n">6818.08</span></div><div class="ct r" style="top:804px;left:1043px;width:190px"><span class="n">4806.7932</span></div><div class="ct r" style="top:804px;left:1236px;width:203px"><span class="n">4410.85</span></div><div class="ct" style="top:827px;left:37px">天津</div><div class="ct r" style="top:827px;left:114px;width:77px"><span class="n">2011</span></div><div class="ct r" style="top:827px;left:194px;width:317px"><span class="n">149.1444957</span></div><div class="ct r" style="top:827px;left:514px;width:154px"><span class="n">85213</span></div><div class="ct r" style="top:827px;left:671px;width:176px"><span class="n">1355</span></div><div class="ct r" style="top:827px;left:850px;width:190px"><span class="n">7598.45</span></div><div class="ct r" style="top:827px;left:1043px;width:190px"><span class="n">5262</span></div><div class="ct r" style="top:827px;left:1236px;width:203px"><span class="n">5430.84</span></div><div class="ct" style="top:850px;left:37px">天津</div><div class="ct r" style="top:850px;left:114px;width:77px"><span class="n">2012</span></div><div class="ct r" style="top:850px;left:194px;width:317px"><span class="n">143.1369257</span></div><div class="ct r" style="top:850px;left:514px;width:154px"><span class="n">93173</span></div><div class="ct r" style="top:850px;left:671px;width:176px"><span class="n">1413</span></div><div class="ct r" style="top:850px;left:850px;width:190px"><span class="n">8208.0083</span></div><div class="ct r" style="top:850px;left:1043px;width:190px"><span class="n">5298</span></div><div class="ct r" style="top:850px;left:1236px;width:203px"><span class="n">6123.06</span></div><div class="ct" style="top:873px;left:37px">天津</div><div class="ct r" style="top:873px;left:114px;width:77px"><span class="n">2013</span></div><div class="ct r" style="top:873px;left:194px;width:317px"><span class="n">151.0324593</span></div><div class="ct r" style="top:873px;left:514px;width:154px"><span class="n">99607</span></div><div class="ct r" style="top:873px;left:671px;width:176px"><span class="n">1472</span></div><div class="ct r" style="top:873px;left:850px;width:190px"><span class="n">7882</span></div><div class="ct r" style="top:873px;left:1043px;width:190px"><span class="n">5278.67</span></div><div class="ct r" style="top:873px;left:1236px;width:203px"><span class="n">6678.6</span></div><div class="ct" style="top:896px;left:37px">天津</div><div class="ct r" style="top:896px;left:114px;width:77px"><span class="n">2014</span></div><div class="ct r" style="top:896px;left:194px;width:317px"><span class="n">143.9349923</span></div><div class="ct r" style="top:896px;left:514px;width:154px"><span class="n">105231</span></div><div class="ct r" style="top:896px;left:671px;width:176px"><span class="n">1517</span></div><div class="ct r" style="top:896px;left:850px;width:190px"><span class="n">8145</span></div><div class="ct r" style="top:896px;left:1043px;width:190px"><span class="n">5027.28</span></div><div class="ct r" style="top:896px;left:1236px;width:203px"><span class="n">7079.1</span></div><div class="ct" style="top:919px;left:37px">天津</div><div class="ct r" style="top:919px;left:114px;width:77px"><span class="n">2015</span></div><div class="ct r" style="top:919px;left:194px;width:317px"><span class="n">61.24206907</span></div><div class="ct r" style="top:919px;left:514px;width:154px"><span class="n">107960.0883</span></div><div class="ct r" style="top:919px;left:671px;width:176px"><span class="n">1546.95</span></div><div class="ct r" style="top:919px;left:850px;width:190px"><span class="n">8319</span></div><div class="ct r" style="top:919px;left:1043px;width:190px"><span class="n">4538.83</span></div><div class="ct r" style="top:919px;left:1236px;width:203px"><span class="n">6982.66</span></div><div class="ct" style="top:942px;left:37px">天津</div><div class="ct r" style="top:942px;left:114px;width:77px"><span class="n">2016</span></div><div class="ct r" style="top:942px;left:194px;width:317px"><span class="n">130.3522523</span></div><div class="ct r" style="top:942px;left:514px;width:154px"><span class="n">115053</span></div><div class="ct r" style="top:942px;left:671px;width:176px"><span class="n">1562</span></div><div class="ct r" style="top:942px;left:850px;width:190px"><span class="n">8078</span></div><div class="ct r" style="top:942px;left:1043px;width:190px"><span class="n">4230.16</span></div><div class="ct r" style="top:942px;left:1236px;width:203px"><span class="n">6805.13</span></div><div class="ct" style="top:965px;left:37px">天津</div><div class="ct r" style="top:965px;left:114px;width:77px"><span class="n">2017</span></div><div class="ct r" style="top:965px;left:194px;width:317px"><span class="n">122.15</span></div><div class="ct r" style="top:965px;left:514px;width:154px"><span class="n">119090</span></div><div class="ct r" style="top:965px;left:671px;width:176px"><span class="n">1557</span></div><div class="ct r" style="top:965px;left:850px;width:190px"><span class="n">7999</span></div><div class="ct r" style="top:965px;left:1043px;width:190px"><span class="n">3875.01</span></div><div class="ct r" style="top:965px;left:1236px;width:203px"><span class="n">6960.08</span></div><div class="selbox"></div><div class="handle"></div></div>
<div class="bot"><div class="bline"></div><div class="abs" style="left:103px;top:0;width:82px;height:27px;background:#fff;border-left:1px solid #ababab;border-right:1px solid #ababab;box-sizing:border-box"></div><div class="abs" style="left:103px;top:24px;width:82px;height:3px;background:#217346"></div><div class="abs" style="left:116px;top:1px;font-size:17.5px;line-height:22px;color:#217346">Sheet1</div><div class="abs" style="left:1167px;top:5px;width:380px;height:19px;background:#fff;border:1px solid #7f7f7f;box-sizing:border-box"></div><svg class="abs" style="left:0;top:0" width="1542" height="27" viewBox="0 974 1542 27"><path d="M33 983.5 V993.6 L27.6 988.5 Z" fill="#c2c2c2"/><path d="M57.4 983.5 V993.6 L62.6 988.5 Z" fill="#c2c2c2"/><circle cx="228" cy="989" r="9.2" fill="none" stroke="#8a8a8a" stroke-width="1.4"/><path d="M222.6 989 H233.4 M228 983.6 V994.4" stroke="#777" stroke-width="1.8"/><rect x="1149" y="983" width="1.6" height="2" fill="#a8a8a8"/><rect x="1149" y="988" width="1.6" height="2" fill="#a8a8a8"/><rect x="1149" y="992.6" width="1.6" height="2" fill="#a8a8a8"/><rect x="1185.5" y="979" width="1.5" height="19" fill="#7f7f7f"/><path d="M1178 985.2 V991.8 L1174 988.5 Z" fill="#666"/></svg></div>
</body></html>
